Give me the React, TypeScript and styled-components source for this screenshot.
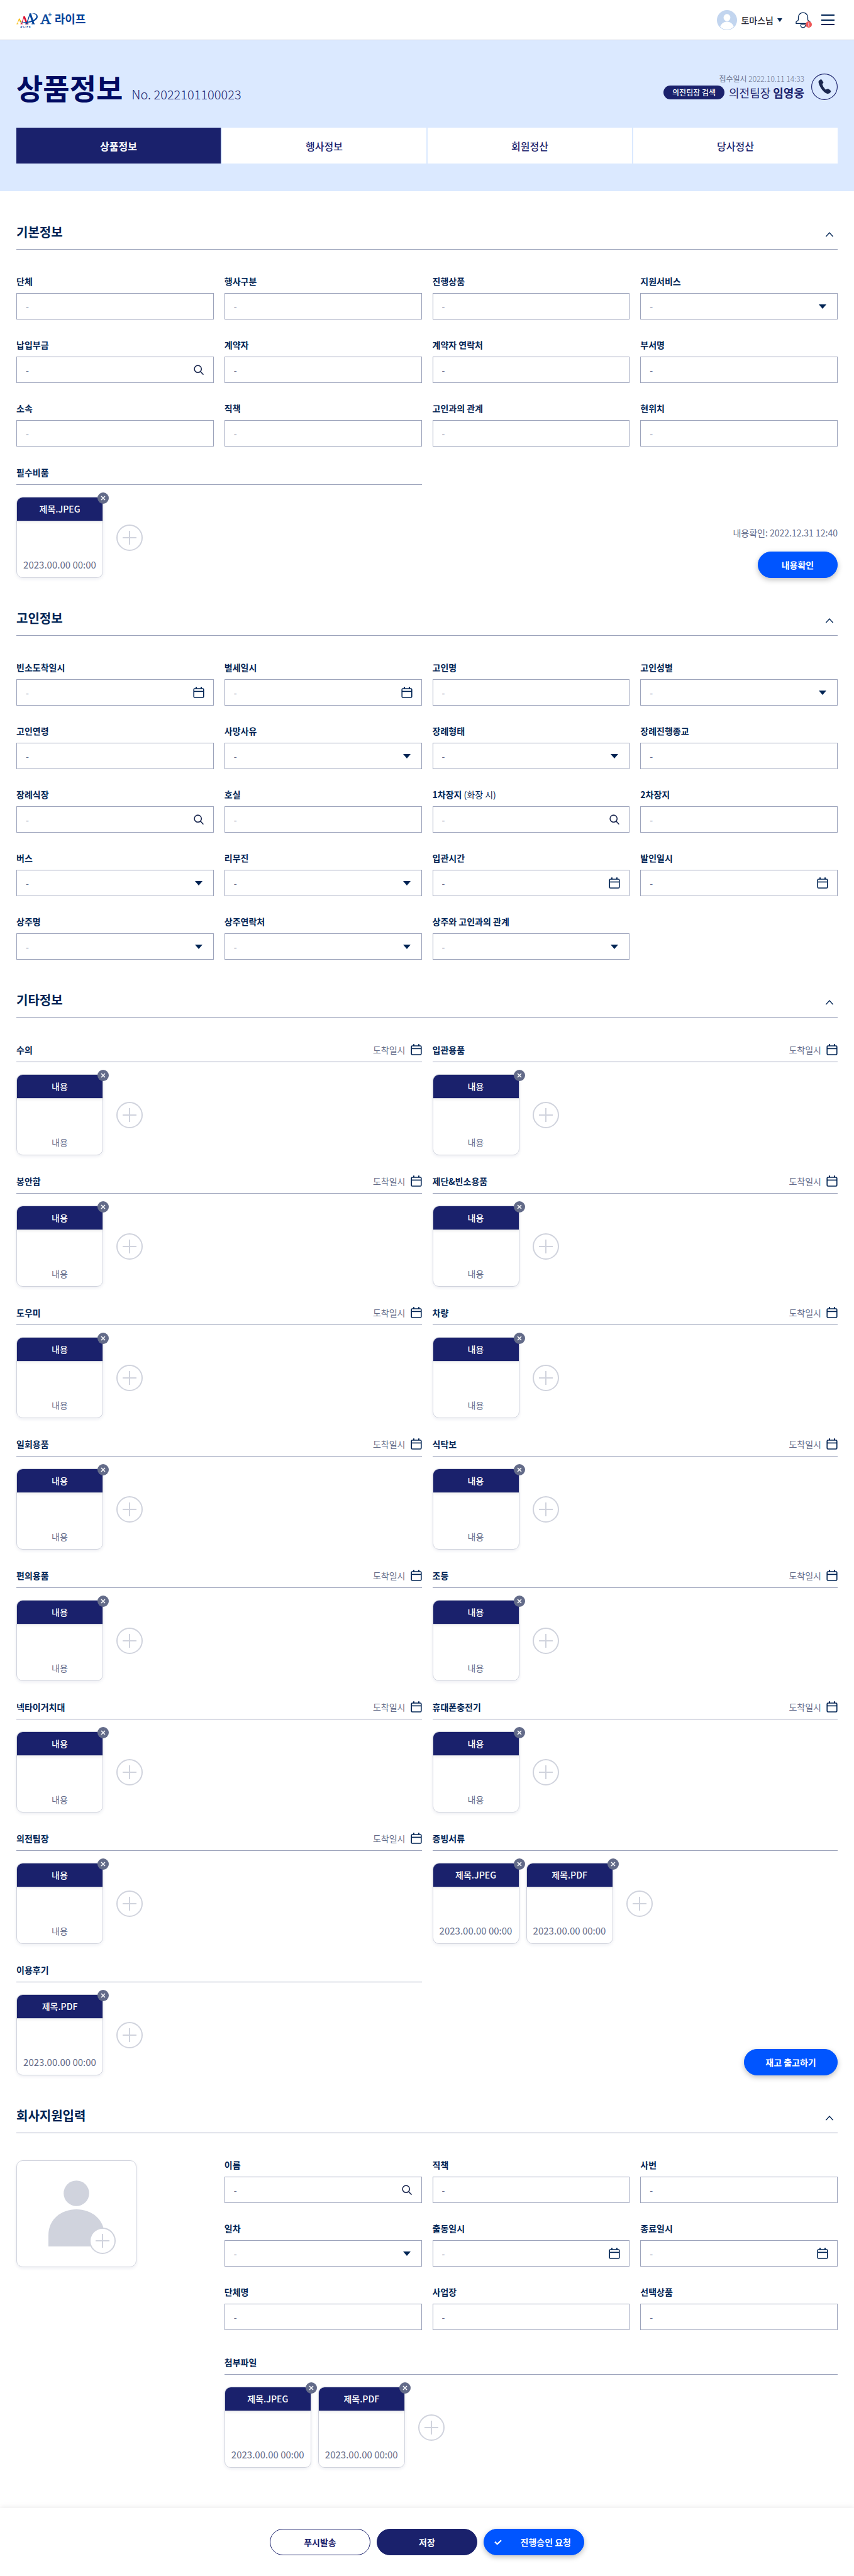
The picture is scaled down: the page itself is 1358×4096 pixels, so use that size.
import React, { useId, useState } from "react";
import styled, { createGlobalStyle, css } from "styled-components";

const color = {
  navy: "#1a216c",
  title: "#000b62",
  ink: "#002454",
  line: "#9ca3bb",
  soft: "#d0d3dd",
  muted: "#636b89",
  sky: "#dbe9ff",
  blue: "#0055ff",
};

const GlobalStyle = createGlobalStyle`
  *, *::before, *::after { box-sizing: border-box; }
  body {
    margin: 0;
    background: #fff;
    color: ${color.ink};
    font-family: "Noto Sans CJK KR", "Noto Sans", sans-serif;
    font-size: 14px;
    line-height: 20px;
  }
  button, input, select { font: inherit; color: inherit; }
  button { cursor: pointer; }
  h1, h2, h3, p { margin: 0; }
  svg { display: block; }
`;

/* ---------- shared bits ---------- */

const IconButton = styled.button`
  display: flex;
  align-items: center;
  justify-content: center;
  padding: 0;
  border: 0;
  background: none;
`;

const PillButton = styled.button<{ $tone: "blue" | "navy" | "outline"; $width: number; $spread?: boolean }>`
  display: flex;
  align-items: center;
  justify-content: ${(p) => (p.$spread ? "space-between" : "center")};
  width: ${(p) => p.$width}px;
  height: 42px;
  padding: 0 ${(p) => (p.$spread ? 20 : 16)}px 0 16px;
  border: 1px solid ${(p) => (p.$tone === "blue" ? color.blue : color.navy)};
  border-radius: 21px;
  background: ${(p) => (p.$tone === "outline" ? "#fff" : p.$tone === "navy" ? color.navy : color.blue)};
  color: ${(p) => (p.$tone === "outline" ? color.navy : "#fff")};
  font-weight: 700;
  ${(p) => p.$tone === "blue" && css`box-shadow: 0 3px 8px rgba(0, 0, 0, 0.25);`}
`;

/* ---------- icons ---------- */

const Logo = () => (
  <svg width="113" height="36" viewBox="54 18 640 204" role="img" aria-label="A+ 라이프">
    <g fill="none" strokeLinecap="butt">
      <path d="M62 154 80 107" stroke="#f8b800" strokeWidth="5" />
      <path d="M78 107 96 140" stroke="#f8b800" strokeWidth="10" />
      <path d="M55 154h17" stroke="#f8b800" strokeWidth="5" />
      <path d="M101 154 124 86" stroke="#dc0a2d" strokeWidth="6" />
      <path d="M123 86 150 154" stroke="#dc0a2d" strokeWidth="15" />
      <path d="M91 154h21M132 154h32" stroke="#dc0a2d" strokeWidth="5" />
      <path d="M146 154 178 60" stroke="#00449b" strokeWidth="8" />
      <path d="M178 60 208 154" stroke="#00449b" strokeWidth="17" />
      <path d="M136 154h25M190 154h33" stroke="#00449b" strokeWidth="6" />
    </g>
    <path
      d="M190 62c28-9 58 2 56 29-2 30-48 49-92 52-32 2-58-3-74-11 26 7 52 7 76 3 42-6 76-24 78-47 1-20-20-28-44-26z"
      fill="#00449b"
    />
    <g fill="#00449b">
      <text x="269" y="155" fontFamily="Liberation Serif, serif" fontSize="134" stroke="#00449b" strokeWidth="3">
        A
      </text>
      <text x="338" y="90" fontFamily="Liberation Sans, sans-serif" fontSize="60" fontWeight="700">
        +
      </text>
      <text x="398" y="147" fontFamily="Noto Sans CJK KR, sans-serif" fontSize="102" fontWeight="700">
        라이프
      </text>
      <text x="89" y="187" fontFamily="Liberation Sans, sans-serif" fontSize="22" fontWeight="700">
        A⁺ L I F E
      </text>
    </g>
  </svg>
);

const Avatar = () => (
  <svg width="32" height="32" viewBox="0 0 32 32" aria-hidden="true">
    <circle cx="16" cy="16" r="16" fill="#c2d5ef" />
    <ellipse cx="16" cy="12" rx="5.4" ry="5.7" fill="#fff" />
    <path d="M5.2 26.2C7 21.600 11 18.600 16 18.600s9 3 10.800 7.600C24.200 29.300 20.400 31 16 31s-8.200-1.700-10.800-4.800z" fill="#fff" />
  </svg>
);

const Triangle = ({ width, height }: { width: number; height: number }) => (
  <svg width={width} height={height} viewBox="0 0 12 7" preserveAspectRatio="none" aria-hidden="true">
    <path d="M0 0h12L6 7z" fill={color.ink} />
  </svg>
);

const BellIcon = () => (
  <svg width="24" height="26" viewBox="0 0 24 26" fill="none" stroke={color.ink} strokeWidth="1.300" aria-hidden="true">
    <path d="M1 18.300v-2.400c0-.7.500-1 1.200-1.200 1.600-.5 2.300-1 2.300-2.600V8.600a7.500 7.500 0 0 1 15 0v3.500c0 1.600.7 2.100 2.300 2.600.7.200 1.200.5 1.200 1.200v2.400z" />
    <path d="M8.200 20.400h7.600v.6a3.800 3.800 0 0 1-7.600 0z" />
  </svg>
);

const MenuIcon = () => (
  <svg width="21" height="18" viewBox="0 0 21 18" fill={color.ink} aria-hidden="true">
    <path d="M0 0h21v2H0zM0 8h21v2H0zM0 15h21v2H0z" />
  </svg>
);

const PhoneIcon = () => (
  <svg width="42" height="42" viewBox="0 0 42 42" aria-hidden="true">
    <circle cx="21" cy="21" r="20.400" fill="none" stroke={color.navy} strokeWidth="1.100" />
    <path
      d="M15 9.200q1-.4 1.800.8l2.400 3.400q.6 1.200-.4 2l-1.400 1.200q1.200 5 5.400 8.800l2.600-1q2-.4 3 .6l2.600 2.200q.8 1.200-.2 2.400-2.400 3-5.400 2.400-5.800-2-10.200-9.200-4-6.800-3.600-10.200.6-2.200 3.400-3.400z"
      fill="#1b2850"
    />
  </svg>
);

const ChevronUp = () => (
  <svg width="14" height="8" viewBox="0 0 14 8" fill="none" stroke={color.ink} strokeWidth="1.300" aria-hidden="true">
    <path d="M1.300 7.200 7 1l5.700 6.200" />
  </svg>
);

const SearchIcon = () => (
  <svg width="18" height="18" viewBox="0 0 18 18" fill="none" stroke="#1b2850" strokeWidth="1.600" strokeLinecap="round" aria-hidden="true">
    <circle cx="7.700" cy="7.700" r="5.600" />
    <path d="m11.800 11.900 4.200 4.300" />
  </svg>
);

const CalendarIcon = () => (
  <svg width="18" height="20" viewBox="0 0 18 20" fill="none" stroke={color.ink} strokeWidth="1.600" aria-hidden="true">
    <rect x="1.200" y="4" width="15.600" height="14" rx="1.400" />
    <path d="M1.200 8.400h15.600" />
    <path d="M5 1.300V4M13 1.300V4" strokeWidth="2" />
  </svg>
);

const CloseIcon = () => (
  <svg width="8" height="8" viewBox="0 0 8 8" stroke="#fff" strokeWidth="1.500" aria-hidden="true">
    <path d="m1 1 6 6M7 1 1 7" />
  </svg>
);

const PlusIcon = () => (
  <svg width="22" height="22" viewBox="0 0 22 22" stroke={color.soft} strokeWidth="2" aria-hidden="true">
    <path d="M11 0v22M0 11h22" />
  </svg>
);

const CheckIcon = () => (
  <svg width="12" height="9" viewBox="0 0 12 9" fill="none" stroke="#fff" strokeWidth="2.200" aria-hidden="true">
    <path d="m1 3.600 3.700 3.600L11 1.200" />
  </svg>
);

const PersonIcon = () => (
  <svg width="89" height="106" viewBox="0 0 89 106" fill={color.soft} aria-hidden="true">
    <circle cx="44.500" cy="20.500" r="20.300" />
    <path d="M0 105V87C0 62 20 46 44.500 46S89 62 89 87v18z" />
  </svg>
);

/* ---------- top bar ---------- */

const TopBar = styled.header`
  display: flex;
  align-items: center;
  justify-content: space-between;
  height: 64px;
  padding: 0 31px 0 26px;
  border-bottom: 1px solid #cbd2df;
`;

const TopActions = styled.div`
  display: flex;
  align-items: center;
`;

const UserButton = styled.button`
  display: flex;
  align-items: center;
  gap: 6px;
  padding: 0;
  border: 0;
  background: none;
  color: #29252f;
  font-weight: 500;
`;

const BellButton = styled(IconButton)`
  position: relative;
  margin: 0 17px 0 21px;
`;

const BellCount = styled.span`
  position: absolute;
  right: -2px;
  bottom: 1px;
  width: 10px;
  height: 10px;
  border-radius: 5px;
  background: #ef5656;
  color: #fff;
  font-size: 8px;
  line-height: 10px;
  text-align: center;
`;

/* ---------- hero ---------- */

const Hero = styled.div`
  padding: 44px 26px;
  background: ${color.sky};
`;

const HeroRow = styled.div`
  display: flex;
  align-items: center;
  justify-content: space-between;
  height: 60px;
  margin-bottom: 35px;
`;

const TitleGroup = styled.div`
  display: flex;
  align-items: baseline;
  gap: 14px;
`;

const PageTitle = styled.h1`
  color: ${color.title};
  font-size: 46px;
  line-height: 60px;
  font-weight: 700;
`;

const DocNumber = styled.span`
  color: ${color.navy};
  font-size: 20px;
  font-weight: 300;
`;

const Manager = styled.div`
  display: flex;
  align-items: center;
  gap: 11px;
`;

const ManagerInfo = styled.div`
  display: flex;
  flex-direction: column;
  align-items: flex-end;
  gap: 2px;
`;

const Received = styled.p`
  color: #68708c;
  font-size: 12px;
  line-height: 16px;
  span { font-weight: 300; }
`;

const ManagerLine = styled.div`
  display: flex;
  align-items: center;
  gap: 7px;
  color: ${color.navy};
  font-size: 18px;
  line-height: 24px;
`;

const ManagerSearch = styled.button`
  height: 22px;
  padding: 0 14px;
  border: 0;
  border-radius: 11px;
  background: ${color.navy};
  color: #fff;
  font-size: 12px;
  line-height: 22px;
  font-weight: 500;
`;

const Tabs = styled.div`
  display: grid;
  grid-template-columns: repeat(4, 1fr);
  gap: 2px;
`;

const Tab = styled.button<{ $active: boolean }>`
  height: 57px;
  border: 0;
  background: ${(p) => (p.$active ? color.navy : "#fff")};
  color: ${(p) => (p.$active ? "#fff" : color.navy)};
  font-size: 16px;
  font-weight: ${(p) => (p.$active ? 700 : 500)};
`;

/* ---------- sections ---------- */

const Main = styled.main`
  display: flex;
  flex-direction: column;
  gap: 50px;
  padding: 51px 26px 64px;
`;

const SectionHead = styled.div`
  display: flex;
  align-items: center;
  justify-content: space-between;
  padding-bottom: 13px;
  border-bottom: 1px solid ${color.line};
`;

const SectionTitle = styled.h2`
  font-size: 20px;
  line-height: 28px;
  font-weight: 700;
`;

const FoldButton = styled(IconButton)<{ $open: boolean }>`
  width: 26px;
  height: 20px;
  align-self: flex-end;
  svg { rotate: ${(p) => (p.$open ? 0 : 180)}deg; }
`;

const SectionBody = styled.div`
  display: flex;
  flex-direction: column;
  gap: 30px;
  padding-top: 40px;
`;

const FieldGrid = styled.div<{ $columns: number }>`
  display: grid;
  grid-template-columns: repeat(${(p) => p.$columns}, minmax(0, 1fr));
  gap: 30px 17px;
`;

const FieldWrap = styled.div`
  display: flex;
  flex-direction: column;
  gap: 9px;
`;

const FieldLabel = styled.label`
  font-weight: 700;
  small { font-size: 14px; font-weight: 400; }
`;

const ControlBox = styled.div`
  display: grid;
  align-items: center;
  > * { grid-area: 1 / 1; }
`;

const controlStyle = css`
  width: 100%;
  height: 42px;
  padding: 0 48px 0 14px;
  border: 1px solid ${color.line};
  border-radius: 0;
  background: #fff;
  color: ${color.muted};
  appearance: none;
`;

const TextInput = styled.input`
  ${controlStyle}
  &::placeholder { color: ${color.muted}; opacity: 1; }
`;

const SelectInput = styled.select`
  ${controlStyle}
`;

const TrailingButton = styled(IconButton)`
  justify-self: end;
  width: 18px;
  margin-right: 15px;
`;

const TrailingMark = styled.span`
  justify-self: end;
  margin-right: 18px;
  pointer-events: none;
`;

const PairGrid = styled.div`
  display: grid;
  grid-template-columns: repeat(2, minmax(0, 1fr));
  gap: 30px 17px;
`;

const BlockHead = styled.div`
  display: flex;
  align-items: center;
  justify-content: space-between;
  height: 31px;
  padding-bottom: 9px;
  border-bottom: 1px solid ${color.line};
`;

const BlockTitle = styled.h3`
  font-size: 14px;
  line-height: 20px;
  font-weight: 700;
`;

const ArrivalButton = styled.button`
  display: flex;
  align-items: center;
  gap: 8px;
  padding: 0;
  border: 0;
  background: none;
  color: ${color.muted};
`;

const CardList = styled.div`
  display: flex;
  align-items: center;
  gap: 11px;
  padding-top: 19px;
`;

const CardBox = styled.article`
  position: relative;
  display: flex;
  flex-direction: column;
  justify-content: space-between;
  width: 138px;
  height: 129px;
  border: 1px solid ${color.soft};
  border-radius: 10px;
  box-shadow: 0 2px 5px rgba(26, 33, 108, 0.08);
`;

const CardHead = styled.div`
  height: 38px;
  border-bottom: 1px solid ${color.soft};
  border-radius: 9px 9px 0 0;
  background: ${color.navy};
  color: #fff;
  line-height: 37px;
  font-weight: 500;
  text-align: center;
  box-shadow: 0 2px 4px rgba(0, 0, 0, 0.06);
`;

const CardText = styled.p<{ $date: boolean }>`
  padding-bottom: 10px;
  color: ${color.muted};
  font-size: ${(p) => (p.$date ? 15 : 14)}px;
  text-align: center;
  white-space: nowrap;
`;

const RemoveButton = styled(IconButton)`
  position: absolute;
  top: -8px;
  right: -10px;
  width: 18px;
  height: 18px;
  border-radius: 9px;
  background: #636b89;
`;

const AddButton = styled(IconButton)`
  width: 42px;
  height: 42px;
  border: 2px solid ${color.soft};
  border-radius: 21px;
  background: #fff;
`;

const ListAddButton = styled(AddButton)`
  margin-left: 10px;
`;

const BlockActions = styled.div`
  display: flex;
  flex-direction: column;
  align-items: flex-end;
  justify-content: flex-end;
  gap: 20px;
`;

const Confirmed = styled.p`
  color: ${color.muted};
`;

const SupportGrid = styled.div`
  display: grid;
  grid-template-columns: repeat(4, minmax(0, 1fr));
  gap: 17px;
  padding-top: 40px;
`;

const SupportFields = styled.div`
  grid-column: span 3;
  display: flex;
  flex-direction: column;
  gap: 40px;
`;

const PhotoBox = styled.div`
  position: relative;
  display: flex;
  align-items: center;
  justify-content: center;
  width: 191px;
  height: 170px;
  margin-top: 3px;
  border: 1px solid ${color.soft};
  border-radius: 10px;
  box-shadow: 0 2px 5px rgba(26, 33, 108, 0.08);
`;

const PhotoAddButton = styled(AddButton)`
  position: absolute;
  right: 32px;
  bottom: 20px;
`;

const Footer = styled.footer`
  display: flex;
  justify-content: center;
  gap: 10px;
  padding: 33px 26px;
  background: #fff;
  box-shadow: 0 -2px 8px rgba(0, 0, 0, 0.07);
`;

/* ---------- composed parts ---------- */

type Kind = "text" | "select" | "search" | "date";
type FieldSpec = { label: string; note?: string; kind?: Kind };

function Field({ label, note, kind = "text" }: FieldSpec) {
  const id = useId();
  return (
    <FieldWrap>
      <FieldLabel htmlFor={id}>
        {label}
        {note && <small> {note}</small>}
      </FieldLabel>
      <ControlBox>
        {kind === "select" ? (
          <>
            <SelectInput id={id}>
              <option>-</option>
            </SelectInput>
            <TrailingMark>
              <Triangle width={12} height={7} />
            </TrailingMark>
          </>
        ) : (
          <TextInput id={id} type="text" placeholder="-" />
        )}
        {kind === "search" && (
          <TrailingButton type="button" aria-label={`${label} 검색`}>
            <SearchIcon />
          </TrailingButton>
        )}
        {kind === "date" && (
          <TrailingButton type="button" aria-label={`${label} 날짜 선택`}>
            <CalendarIcon />
          </TrailingButton>
        )}
      </ControlBox>
    </FieldWrap>
  );
}

const Fields = ({ items, columns = 4 }: { items: FieldSpec[]; columns?: number }) => (
  <FieldGrid $columns={columns}>
    {items.map((f) => (
      <Field key={f.label} {...f} />
    ))}
  </FieldGrid>
);

type CardSpec = { head: string; text: string };

function Block({ title, arrival, cards }: { title: string; arrival?: boolean; cards: CardSpec[] }) {
  return (
    <section>
      <BlockHead>
        <BlockTitle>{title}</BlockTitle>
        {arrival && (
          <ArrivalButton type="button">
            도착일시
            <CalendarIcon />
          </ArrivalButton>
        )}
      </BlockHead>
      <CardList>
        {cards.map((c) => (
          <CardBox key={c.head}>
            <CardHead>{c.head}</CardHead>
            <CardText $date={c.text.startsWith("2")}>{c.text}</CardText>
            <RemoveButton type="button" aria-label={`${c.head} 삭제`}>
              <CloseIcon />
            </RemoveButton>
          </CardBox>
        ))}
        <ListAddButton type="button" aria-label={`${title} 추가`}>
          <PlusIcon />
        </ListAddButton>
      </CardList>
    </section>
  );
}

function Section({ title, children }: { title: string; children: React.ReactNode }) {
  const [open, setOpen] = useState(true);
  return (
    <section>
      <SectionHead>
        <SectionTitle>{title}</SectionTitle>
        <FoldButton type="button" $open={open} aria-expanded={open} aria-label={`${title} 접기`} onClick={() => setOpen(!open)}>
          <ChevronUp />
        </FoldButton>
      </SectionHead>
      {open && children}
    </section>
  );
}

/* ---------- data ---------- */

const basicFields: FieldSpec[] = [
  { label: "단체" },
  { label: "행사구분" },
  { label: "진행상품" },
  { label: "지원서비스", kind: "select" },
  { label: "납입부금", kind: "search" },
  { label: "계약자" },
  { label: "계약자 연락처" },
  { label: "부서명" },
  { label: "소속" },
  { label: "직책" },
  { label: "고인과의 관계" },
  { label: "현위치" },
];

const deceasedFields: FieldSpec[] = [
  { label: "빈소도착일시", kind: "date" },
  { label: "별세일시", kind: "date" },
  { label: "고인명" },
  { label: "고인성별", kind: "select" },
  { label: "고인연령" },
  { label: "사망사유", kind: "select" },
  { label: "장례형태", kind: "select" },
  { label: "장례진행종교" },
  { label: "장례식장", kind: "search" },
  { label: "호실" },
  { label: "1차장지", note: "(화장 시)", kind: "search" },
  { label: "2차장지" },
  { label: "버스", kind: "select" },
  { label: "리무진", kind: "select" },
  { label: "입관시간", kind: "date" },
  { label: "발인일시", kind: "date" },
  { label: "상주명", kind: "select" },
  { label: "상주연락처", kind: "select" },
  { label: "상주와 고인과의 관계", kind: "select" },
];

const supportFields: FieldSpec[] = [
  { label: "이름", kind: "search" },
  { label: "직책" },
  { label: "사번" },
  { label: "일차", kind: "select" },
  { label: "출동일시", kind: "date" },
  { label: "종료일시", kind: "date" },
  { label: "단체명" },
  { label: "사업장" },
  { label: "선택상품" },
];

const supplies = [
  "수의", "입관용품", "봉안함", "제단&빈소용품", "도우미", "차량", "일회용품",
  "식탁보", "편의용품", "조등", "넥타이거치대", "휴대폰충전기", "의전팀장",
];

const stamp = "2023.00.00 00:00";
const jpeg: CardSpec = { head: "제목.JPEG", text: stamp };
const pdf: CardSpec = { head: "제목.PDF", text: stamp };
const content: CardSpec = { head: "내용", text: "내용" };

const tabs = ["상품정보", "행사정보", "회원정산", "당사정산"];

export default function App() {
  const [tab, setTab] = useState(tabs[0]);
  return (
    <>
      <GlobalStyle />
      <TopBar>
        <a href="#home">
          <Logo />
        </a>
        <TopActions>
          <UserButton type="button">
            <Avatar />
            토마스님
            <Triangle width={8} height={6} />
          </UserButton>
          <BellButton type="button" aria-label="알림">
            <BellIcon />
            <BellCount>1</BellCount>
          </BellButton>
          <IconButton type="button" aria-label="메뉴">
            <MenuIcon />
          </IconButton>
        </TopActions>
      </TopBar>

      <Hero>
        <HeroRow>
          <TitleGroup>
            <PageTitle>상품정보</PageTitle>
            <DocNumber>No. 2022101100023</DocNumber>
          </TitleGroup>
          <Manager>
            <ManagerInfo>
              <Received>
                접수일시 <span>2022.10.11 14:33</span>
              </Received>
              <ManagerLine>
                <ManagerSearch type="button">의전팀장 검색</ManagerSearch>
                <span>
                  의전팀장 <b>임영웅</b>
                </span>
              </ManagerLine>
            </ManagerInfo>
            <IconButton type="button" aria-label="전화">
              <PhoneIcon />
            </IconButton>
          </Manager>
        </HeroRow>
        <Tabs role="tablist">
          {tabs.map((t) => (
            <Tab key={t} type="button" role="tab" aria-selected={t === tab} $active={t === tab} onClick={() => setTab(t)}>
              {t}
            </Tab>
          ))}
        </Tabs>
      </Hero>

      <Main>
        <Section title="기본정보">
          <SectionBody>
            <Fields items={basicFields} />
            <PairGrid>
              <Block title="필수비품" cards={[jpeg]} />
              <BlockActions>
                <Confirmed>내용확인: 2022.12.31 12:40</Confirmed>
                <PillButton type="button" $tone="blue" $width={127}>
                  내용확인
                </PillButton>
              </BlockActions>
            </PairGrid>
          </SectionBody>
        </Section>

        <Section title="고인정보">
          <SectionBody>
            <Fields items={deceasedFields} />
          </SectionBody>
        </Section>

        <Section title="기타정보">
          <SectionBody>
            <PairGrid>
              {supplies.map((s) => (
                <Block key={s} title={s} arrival cards={[content]} />
              ))}
              <Block title="증빙서류" cards={[jpeg, pdf]} />
              <Block title="이용후기" cards={[pdf]} />
              <BlockActions>
                <PillButton type="button" $tone="blue" $width={149}>
                  재고 출고하기
                </PillButton>
              </BlockActions>
            </PairGrid>
          </SectionBody>
        </Section>

        <Section title="회사지원입력">
          <SupportGrid>
            <PhotoBox>
              <PersonIcon />
              <PhotoAddButton type="button" aria-label="사진 추가">
                <PlusIcon />
              </PhotoAddButton>
            </PhotoBox>
            <SupportFields>
              <Fields items={supportFields} columns={3} />
              <Block title="첨부파일" cards={[jpeg, pdf]} />
            </SupportFields>
          </SupportGrid>
        </Section>
      </Main>

      <Footer>
        <PillButton type="button" $tone="outline" $width={160}>
          푸시발송
        </PillButton>
        <PillButton type="button" $tone="navy" $width={160}>
          저장
        </PillButton>
        <PillButton type="button" $tone="blue" $width={160} $spread>
          <CheckIcon />
          진행승인 요청
        </PillButton>
      </Footer>
    </>
  );
}
